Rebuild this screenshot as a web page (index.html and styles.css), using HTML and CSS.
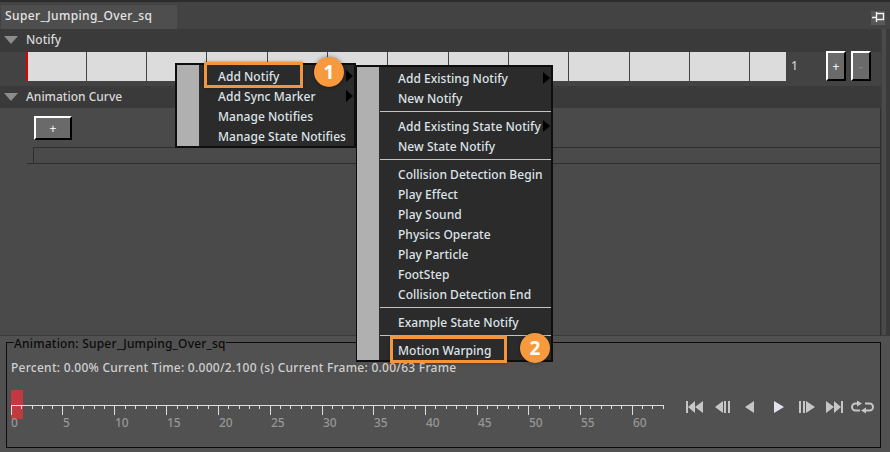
FILE: index.html
```html
<!DOCTYPE html>
<html lang="en">
<head>
<meta charset="utf-8">
<title>Notify</title>
<link rel="stylesheet" href="styles.css">
</head>
<body>
<div class="window">
  <div class="tabbar">
    <div class="tab">Super_Jumping_Over_sq</div>
    <button class="pin"><svg width="14" height="14" viewBox="0 0 14 14"><path d="M1 6.500H5M5.500 1V11M5.500 2.500H12.500V8.500H5.500" fill="none" stroke="#f0f0f0" stroke-width="1.400"/></svg></button>
  </div>
  <div class="editor">
    <div class="tracks">
      <div class="header"><span class="caret"></span>Notify</div>
      <div class="track">
        <div class="cells">
          <i class="cell first"></i><i class="cell"></i><i class="cell"></i><i class="cell"></i><i class="cell"></i><i class="cell"></i><i class="cell"></i><i class="cell"></i><i class="cell"></i><i class="cell"></i><i class="cell"></i><i class="cell"></i><i class="cell last"></i>
        </div>
        <span class="count">1</span>
        <button class="bevel small">+</button>
        <button class="bevel small dim">-</button>
      </div>
      <div class="header second"><span class="caret"></span>Animation Curve</div>
      <div class="curve">
        <button class="bevel wide">+</button>
        <div class="curve-box"></div>
      </div>
    </div>
    <div class="scroll"></div>
  </div>
  <div class="bottom">
    <fieldset class="group">
      <legend>Animation: Super_Jumping_Over_sq</legend>
      <div class="status">Percent: 0.00% Current Time: 0.000/2.100 (s) Current Frame: 0.00/63 Frame</div>
      <div class="transport">
        <div class="timeline">
          <span class="handle"></span>
          <svg class="ruler" width="660" height="40" viewBox="0 0 660 40">
            <g transform="translate(0 4)"><path class="ticks" d="M5 11.500H658M5.500 11V21M15.500 11V15M26.500 11V15M36.500 11V15M46.500 11V15M56.500 11V21M67.500 11V15M77.500 11V15M88.500 11V15M98.500 11V15M108.500 11V21M119.500 11V15M129.500 11V15M140.500 11V15M150.500 11V15M160.500 11V21M171.500 11V15M181.500 11V15M191.500 11V15M202.500 11V15M212.500 11V21M222.500 11V15M233.500 11V15M243.500 11V15M253.500 11V15M264.500 11V21M274.500 11V15M284.500 11V15M295.500 11V15M305.500 11V15M316.500 11V21M326.500 11V15M336.500 11V15M347.500 11V15M357.500 11V15M367.500 11V21M378.500 11V15M388.500 11V15M398.500 11V15M409.500 11V15M419.500 11V21M429.500 11V15M440.500 11V15M450.500 11V15M460.500 11V15M471.500 11V21M481.500 11V15M491.500 11V15M502.500 11V15M512.500 11V15M522.500 11V21M533.500 11V15M543.500 11V15M553.500 11V15M564.500 11V15M574.500 11V21M584.500 11V15M595.500 11V15M605.500 11V15M615.500 11V15M626.500 11V21M636.500 11V15M646.500 11V15M657.500 11V15"/></g>
            <g class="labels">
              <text x="5" y="37">0</text><text x="57" y="37">5</text><text x="109" y="37">10</text><text x="161" y="37">15</text><text x="213" y="37">20</text><text x="265" y="37">25</text><text x="317" y="37">30</text><text x="368" y="37">35</text><text x="420" y="37">40</text><text x="472" y="37">45</text><text x="523" y="37">50</text><text x="575" y="37">55</text><text x="627" y="37">60</text>
            </g>
          </svg>
        </div>
        <div class="controls">
          <svg width="190" height="14" viewBox="0 0 190 14" class="ctrl">
            <path d="M1 1H3V13H1ZM10 1V13L3 7ZM18 1V13L10 7Z"/>
            <path d="M38 1V13L30 7ZM39 1H41V13H39ZM43 1H45V13H43Z"/>
            <path d="M69 1V13L60 7Z"/>
            <path class="play" d="M89 1V13L99 7Z"/>
            <path d="M114 1H116V13H114ZM118 1H120V13H118ZM121 1L130 7L121 13Z"/>
            <path d="M141 1L149 7L141 13ZM149 1L156 7L149 13ZM156 1H158V13H156Z"/>
            <path class="loop" d="M174 3.500H170.500A3.500 3.500 0 0 0 170.500 10.500H175M179 10.500H184.500A3.500 3.500 0 0 0 184.500 3.500H180"/>
            <path d="M172 0.500L177 3.500L172 6.500ZM181 7.500L176 10.500L181 13.500Z"/>
          </svg>
        </div>
      </div>
    </fieldset>
  </div>

  <div class="menu menu-one">
    <div class="item">Add Notify</div>
    <div class="item">Add Sync Marker</div>
    <div class="item">Manage Notifies</div>
    <div class="item">Manage State Notifies</div>
    <span class="arrow a1"></span>
    <span class="arrow a2"></span>
  </div>
  <div class="menu menu-two">
    <div class="item">Add Existing Notify</div>
    <div class="item">New Notify</div>
    <div class="sep"></div>
    <div class="item">Add Existing State Notify</div>
    <div class="item">New State Notify</div>
    <div class="sep"></div>
    <div class="item">Collision Detection Begin</div>
    <div class="item">Play Effect</div>
    <div class="item">Play Sound</div>
    <div class="item">Physics Operate</div>
    <div class="item">Play Particle</div>
    <div class="item">FootStep</div>
    <div class="item">Collision Detection End</div>
    <div class="sep"></div>
    <div class="item">Example State Notify</div>
    <div class="sep"></div>
    <div class="item">Motion Warping</div>
    <span class="arrow a3"></span>
    <span class="arrow a4"></span>
  </div>
  <div class="mark mark-one"></div>
  <div class="mark mark-two"></div>
  <div class="badge badge-one">1</div>
  <div class="badge badge-two">2</div>
</div>
</body>
</html>
```
FILE: styles.css
```css
* { box-sizing: border-box; }
html, body { margin: 0; padding: 0; }
body {
  width: 890px;
  height: 452px;
  overflow: hidden;
  background: #3c3c3c;
  font-family: "Noto Sans", sans-serif;
  font-size: 12px;
  font-weight: 500;
  color: #dcdcdc;
}
.window {
  position: relative;
  width: 890px;
  height: 452px;
  display: flex;
  flex-direction: column;
  border-top: 2px solid #2c2c2c;
}
.tabbar {
  height: 27px;
  flex: none;
  display: flex;
  align-items: flex-end;
  justify-content: space-between;
  background: #434343;
  padding: 0 5px 0 1px;
}
.tab {
  width: 176px;
  height: 24px;
  padding-left: 4px;
  line-height: 22px;
  letter-spacing: 0.38px;
  background: #4e4e4e;
  color: #e4e4e4;
}
.pin {
  width: 14px;
  height: 14px;
  margin-bottom: 4px;
  padding: 0;
  border: 0;
  background: #585858;
  display: block;
}
.pin svg { display: block; }
.editor {
  height: 306px;
  flex: none;
  display: flex;
}
.tracks {
  flex: 1;
  display: flex;
  flex-direction: column;
  background: #434343;
}
.scroll {
  width: 9px;
  background: #4a4a4a;
  border-left: 1px solid #3f3f3f;
  border-right: 4px solid #3a3a3a;
}
.header {
  height: 23px;
  flex: none;
  display: flex;
  align-items: center;
  gap: 8px;
  padding: 0 0 2px 4px;
  background: #3a3a3a;
  color: #d8d8d8;
}
.header.second { height: 22px; padding-bottom: 1px; }
.header + .track { height: 34px; }
.caret {
  width: 0;
  height: 0;
  border-left: 7px solid transparent;
  border-right: 7px solid transparent;
  border-top: 8px solid #8c8c8c;
}
.track {
  flex: none;
  display: flex;
  align-items: flex-start;
  background: #434343;
  padding-left: 26px;
}
.cells {
  display: flex;
  width: 760px;
  height: 29px;
  background: #dcdcdc;
  border-left: 2px solid #e00000;
}
.cell {
  flex: 0 0 60.35px;
  height: 29px;
  border-right: 1px solid #444;
}
.cell.first { flex-basis: 58.5px; }
.cell.last { flex: 1; border-right: 0; }
.count {
  width: 40px;
  padding-left: 5px;
  line-height: 28px;
  color: #c8c8c8;
}
.bevel {
  padding: 0;
  background: #6a6a6a;
  border-style: solid;
  border-width: 2px;
  border-color: #fff #000 #000 #fff;
  color: #f0f0f0;
  font: 500 12px "Noto Sans", sans-serif;
}
.small {
  width: 20px;
  height: 30px;
  margin-top: -1px;
  margin-right: 5px;
}
.dim { color: #888; }
.curve {
  flex: 1;
  background: #4a4a4a;
  border-right: 1px solid #2e2e2e;
  padding: 8px 0 0 34px;
}
.wide {
  display: block;
  width: 38px;
  height: 24px;
}
.curve-box {
  height: 17px;
  margin: 7px 0 0 -1px;
  border: 1px solid #2e2e2e;
  border-right: 0;
  position: relative;
}
.curve-box::after {
  content: "";
  position: absolute;
  left: -7px;
  width: 7px;
  bottom: -1px;
  height: 1px;
  background: #2e2e2e;
}
.bottom {
  flex: 1;
  background: #515151;
  border-top: 1px solid #3a3a3a;
  padding: 0 9px 0 6px;
}
.group {
  margin: 0;
  height: 112px;
  padding: 12px 4px 0;
  border: 2px solid #0c0c0c;
  border-width: 1.500px;
  min-width: 0;
}
.group legend {
  margin-left: 3px;
  padding: 0;
  height: 12px;
  color: #0c0c0c;
  line-height: 16px;
  letter-spacing: 0.2px;
  white-space: nowrap;
}
.status { color: #cfcfcf; line-height: 16px; letter-spacing: 0.26px; }
.transport {
  display: flex;
  position: relative;
  margin-top: 14px;
}
.timeline {
  position: relative;
  width: 660px;
  height: 40px;
  margin-left: -5px;
}
.ruler { display: block; position: relative; }
.handle {
  position: absolute;
  left: 5px;
  top: 0;
  width: 12px;
  height: 29px;
  background: #c23a3f;
}
.ticks { fill: none; stroke: #dedede; stroke-width: 1; }
.labels text { fill: #969696; font-size: 12px; }
.controls { margin: 10px 0 0 19px; }
.ctrl { display: block; fill: #c6c6c6; }
.ctrl .play { fill: #e2e2ee; }
.ctrl .loop { fill: none; stroke: #c6c6c6; stroke-width: 2; }
.menu {
  position: absolute;
  background: #2b2b2b;
  border: 2px solid #0e0e0e;
  color: #dde3e8;
  letter-spacing: 0.04px;
}
.menu::before {
  content: "";
  position: absolute;
  left: 0;
  top: 0;
  bottom: 0;
  width: 22px;
  background: #b0b0b0;
}
.menu-two::before { left: -1px; }
.menu-one { left: 175px; top: 61px; width: 181px; height: 85px; padding-top: 2px; }
.menu-two { left: 356px; top: 63px; width: 197px; height: 297px; padding-top: 2px; }
.item { height: 20px; line-height: 20px; white-space: nowrap; }
.menu-one .item { padding-left: 41px; }
.menu-two .item { padding-left: 40px; }
.sep {
  height: 1px;
  margin: 2px 0 5px 22px;
  background: #c4c4c4;
}
.arrow {
  position: absolute;
  width: 0;
  height: 0;
  border-top: 6.500px solid transparent;
  border-bottom: 6.500px solid transparent;
  border-left: 7px solid #000;
}
.a1 { left: 169px; top: 5px; }
.a2 { left: 169px; top: 25px; }
.a3 { left: 185px; top: 5px; }
.a4 { left: 185px; top: 53px; }
.mark {
  position: absolute;
  border: 3px solid #f2953c;
  box-shadow: 0 0 3px rgba(0, 0, 0, 0.35);
}
.mark-one { left: 204px; top: 60px; width: 99px; height: 26px; }
.mark-two { left: 390px; top: 334px; width: 117px; height: 27px; }
.badge {
  position: absolute;
  width: 30px;
  height: 30px;
  border-radius: 50%;
  background: #f79a3e;
  color: #fff;
  font-size: 19px;
  font-weight: 700;
  line-height: 30px;
  text-align: center;
  box-shadow: 0 0 4px rgba(0, 0, 0, 0.4);
}
.badge-one { left: 314px; top: 55px; }
.badge-two { left: 520px; top: 331px; }
```
